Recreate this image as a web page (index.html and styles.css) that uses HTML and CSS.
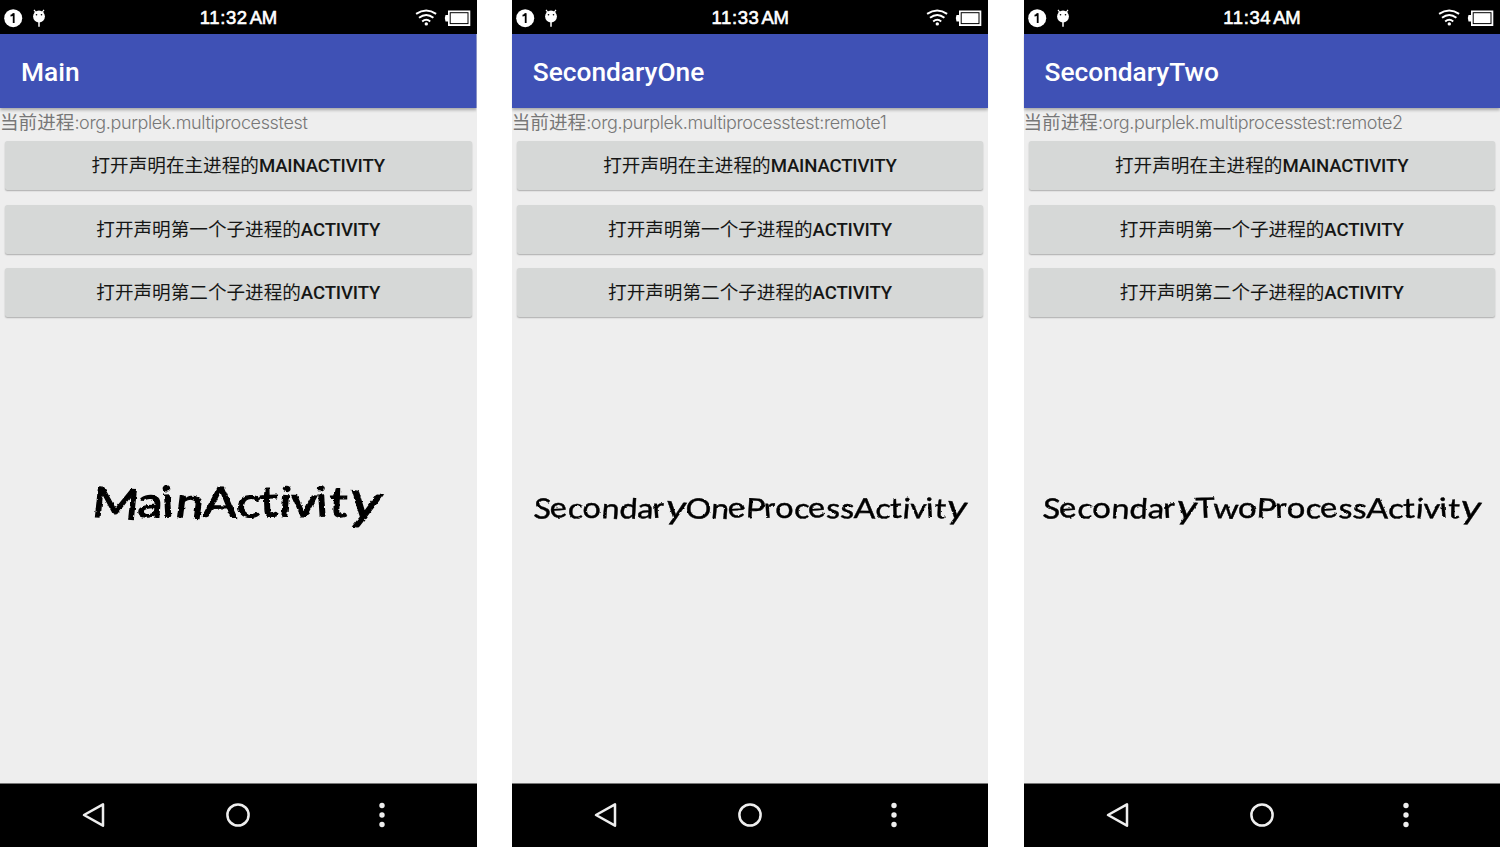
FILE: index.html
```html
<!DOCTYPE html>
<html lang="zh-CN">
<head>
<meta charset="utf-8">
<title>MultiProcessTest</title>
<link rel="stylesheet" href="styles.css">
</head>
<body>
<svg class="defs" width="0" height="0" aria-hidden="true">
  <filter id="chalk" x="-5%" y="-20%" width="110%" height="150%">
    <feTurbulence type="fractalNoise" baseFrequency="0.25" numOctaves="2" seed="4" result="n"/>
    <feDisplacementMap in="SourceGraphic" in2="n" scale="3" xChannelSelector="R" yChannelSelector="G"/>
  </filter>
  <filter id="chalk-fine" x="-5%" y="-20%" width="110%" height="150%">
    <feTurbulence type="fractalNoise" baseFrequency="0.2" numOctaves="2" seed="4" result="n"/>
    <feDisplacementMap in="SourceGraphic" in2="n" scale="2" xChannelSelector="R" yChannelSelector="G"/>
  </filter>
  <symbol id="notices" viewBox="0 0 50 34">
    <circle cx="13.200" cy="17.200" r="9" fill="#fff"/>
    <path d="M10.500 14.600Q13 14.600 13.700 12.200V22" fill="none" stroke="#000" stroke-width="1.800"/>
    <circle cx="39" cy="15.500" r="5.900" fill="#fff"/>
    <path d="M34 8.800L36 11.500M44 8.800L42 11.500" stroke="#fff" stroke-width="1.200"/>
    <path d="M39 20V25.800" stroke="#fff" stroke-width="1.500"/>
    <circle cx="36.500" cy="13.700" r=".8"/><circle cx="41.500" cy="13.700" r=".8"/>
  </symbol>
  <symbol id="signals" viewBox="0 0 60 34">
    <g fill="none" stroke="#fff" stroke-width="2">
      <path d="M-.9 12.900Q9.300 6.100 19.100 12.900"/>
      <path d="M2 16.800Q9.300 11.200 16.400 16.800"/>
      <path d="M5.200 20.500Q9.300 17.100 13.200 20.500"/>
    </g>
    <circle cx="9.300" cy="22.900" r="1.700" fill="#fff"/>
    <path d="M31 9.400H53.300V24.900H31V20.500H28.500Q27 17.300 28.500 14H31Z" fill="#fff"/>
    <rect x="32.700" y="11.200" width="18.800" height="11.900"/>
    <rect x="33.700" y="12.200" width="16.800" height="9.900" fill="#fff"/>
  </symbol>
  <symbol id="back" viewBox="0 0 30 30"><path d="M5 15L24 4.300V25.700Z" fill="none" stroke="#eee" stroke-width="2.500" stroke-linejoin="round"/></symbol>
  <symbol id="home" viewBox="0 0 30 30"><circle cx="15" cy="15" r="10.600" fill="none" stroke="#eee" stroke-width="2.500"/></symbol>
  <symbol id="more" viewBox="0 0 30 30"><g fill="#eee"><circle cx="15" cy="5.500" r="2.700"/><circle cx="15" cy="15" r="2.700"/><circle cx="15" cy="24.500" r="2.700"/></g></symbol>
</svg>
<main class="screens">
  <section class="phone">
    <div class="status"><svg class="notices"><use href="#notices"/></svg><span class="time">11:32<span class="ampm">AM</span></span><svg class="signals"><use href="#signals"/></svg></div>
    <header class="appbar">Main</header>
    <div class="content">
      <p class="process">当前进程<span class="pkg">:org.purplek.multiprocesstest</span></p>
      <button class="btn">打开声明在主进程的<b>MAINACTIVITY</b></button>
      <button class="btn">打开声明第一个子进程的<b>ACTIVITY</b></button>
      <button class="btn">打开声明第二个子进程的<b>ACTIVITY</b></button>
      <svg class="label" viewBox="0 0 476 100"><text class="hand large" x="91" y="56.500" textLength="288" lengthAdjust="spacingAndGlyphs" rotate="5 3 -3 6 2 3 -2 4 2 -3 2 9">MainActivit<tspan class="tail-large">y</tspan></text></svg>
    </div>
    <nav class="nav"><svg><use href="#back"/></svg><svg><use href="#home"/></svg><svg><use href="#more"/></svg></nav>
  </section>
  <section class="phone">
    <div class="status"><svg class="notices"><use href="#notices"/></svg><span class="time">11:33<span class="ampm">AM</span></span><svg class="signals"><use href="#signals"/></svg></div>
    <header class="appbar">SecondaryOne</header>
    <div class="content">
      <p class="process">当前进程<span class="pkg">:org.purplek.multiprocesstest:remote1</span></p>
      <button class="btn">打开声明在主进程的<b>MAINACTIVITY</b></button>
      <button class="btn">打开声明第一个子进程的<b>ACTIVITY</b></button>
      <button class="btn">打开声明第二个子进程的<b>ACTIVITY</b></button>
      <svg class="label" viewBox="0 0 476 100"><text class="hand" x="21" y="58" textLength="433" lengthAdjust="spacingAndGlyphs" rotate="4 -5 3 0 4 3 3 -3 7 3 4 -5 3 -3 0 3 -5 3 4 2 3 -2 4 2 -3 2 7">Secondar<tspan class="tail">y</tspan>OneProcessActivit<tspan class="tail">y</tspan></text></svg>
    </div>
    <nav class="nav"><svg><use href="#back"/></svg><svg><use href="#home"/></svg><svg><use href="#more"/></svg></nav>
  </section>
  <section class="phone">
    <div class="status"><svg class="notices"><use href="#notices"/></svg><span class="time">11:34<span class="ampm">AM</span></span><svg class="signals"><use href="#signals"/></svg></div>
    <header class="appbar">SecondaryTwo</header>
    <div class="content">
      <p class="process">当前进程<span class="pkg">:org.purplek.multiprocesstest:remote2</span></p>
      <button class="btn">打开声明在主进程的<b>MAINACTIVITY</b></button>
      <button class="btn">打开声明第一个子进程的<b>ACTIVITY</b></button>
      <button class="btn">打开声明第二个子进程的<b>ACTIVITY</b></button>
      <svg class="label" viewBox="0 0 476 100"><text class="hand" x="18" y="58" textLength="438" lengthAdjust="spacingAndGlyphs" rotate="4 -5 3 0 4 3 3 -3 7 -2 3 0 3 -3 0 3 -5 3 4 2 3 -2 4 2 -3 2 7">Secondar<tspan class="tail">y</tspan>TwoProcessActivit<tspan class="tail">y</tspan></text></svg>
    </div>
    <nav class="nav"><svg><use href="#back"/></svg><svg><use href="#home"/></svg><svg><use href="#more"/></svg></nav>
  </section>
</main>
</body>
</html>
```
FILE: styles.css
```css
* { box-sizing: border-box; }
body { margin: 0; background: #fff; overflow: hidden; }
.defs { position: absolute; }
.screens { display: grid; grid-template-columns: repeat(3, 476.5px); justify-content: space-between; height: 847px; }
.phone { display: flex; flex-direction: column; height: 847px; background: #eee; }
.status { display: grid; grid-template-columns: 1fr auto 1fr; align-items: center; height: 34px; background: #000; color: #fff; }
.notices { width: 50px; height: 34px; }
.signals { width: 60px; height: 34px; justify-self: end; overflow: visible; }
#signals { overflow: visible; }
.time { font: 18.5px/34px "Liberation Sans", Arial, sans-serif; -webkit-text-stroke: .6px #fff; padding-top: 1px; letter-spacing: .6px; }
.ampm { margin-left: 2px; letter-spacing: -.4px; }
.appbar { height: 74px; padding: 1px 21px 0; background: #3f51b5; color: #fff; font: 500 26.3px/74px Roboto, sans-serif; box-shadow: 0 2px 3px rgba(0,0,0,.3); clip-path: inset(0 0 -5px 0); z-index: 1; }
.content { flex: 1; display: flex; flex-direction: column; }
.process { margin: 0; height: 33px; line-height: 28px; font-family: Inter, "Noto Sans CJK SC", sans-serif; font-size: 18.6px; color: #777; white-space: nowrap; }
.pkg { font-size: 18px; font-weight: 300; letter-spacing: -.36px; }
.btn { flex: none; height: 49px; margin: 0 5px 14.500px; padding: 2px 0 0; border: 0; border-radius: 2.500px; background: #d6d8d7; box-shadow: 0 1px 1.500px rgba(0,0,0,.28); color: #151615; font: 400 18.600px/47px Roboto, "Noto Sans CJK SC", sans-serif; }
.btn b { font-weight: 500; letter-spacing: -.15px; }
.label { width: 476px; height: 100px; margin-top: 128.500px; overflow: visible; }
.hand { font: 400 28px Lato, sans-serif; font-variant-ligatures: none; fill: #000; stroke: #000; stroke-width: .4px; filter: url(#chalk-fine); }
.large { font-size: 42px; stroke-width: 1.200px; filter: url(#chalk); }
.tail { font-size: 34px; }
.tail-large { font-size: 52px; }
.nav { display: flex; justify-content: center; align-items: center; gap: 114px; height: 64px; padding-bottom: 1px; background: #000; border-top: 1px solid #777; }
.nav svg { width: 30px; height: 30px; }
```
